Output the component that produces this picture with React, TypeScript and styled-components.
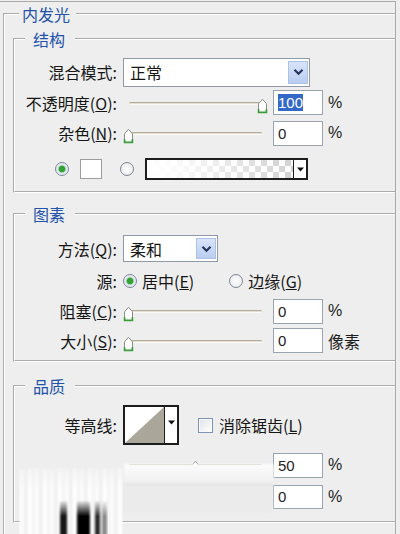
import React from "react";
import styled, { createGlobalStyle } from "styled-components";

const GlobalStyle = createGlobalStyle`
  html, body {
    margin: 0;
    padding: 0;
    background: #eeeeee;
  }
  body {
    width: 400px;
    height: 534px;
    overflow: hidden;
    font-family: "Noto Sans CJK SC", "Noto Sans", sans-serif;
    color: #161616;
  }
`;

const Window = styled.div`
  position: relative;
  box-sizing: border-box;
  width: 396px;
  height: 533px;
  margin-top: 1px;
  padding-left: 3px;
  border-top: 1px solid #a9a9a9;
  border-right: 1px solid #a9a9a9;
  overflow: hidden;
`;

const OuterGroup = styled.fieldset`
  margin: 2px 0 0 0;
  padding: 0;
  min-width: 0;
  border: 2px groove #ffffff;
  border-right: none;
  border-bottom: none;
  height: 560px;
`;

const Group = styled.fieldset<{ $mt: number; $pt: number; $pb: number }>`
  margin: ${(p) => p.$mt}px 0 0 8px;
  padding: ${(p) => p.$pt}px 0 ${(p) => p.$pb}px 0;
  min-width: 0;
  border: 2px groove #ffffff;
  border-right: none;
`;

const Legend = styled.legend<{ $ml: number; $pl: number; $pr: number }>`
  margin-left: ${(p) => p.$ml}px;
  padding: 0 ${(p) => p.$pr}px 0 ${(p) => p.$pl}px;
  height: 20px;
  font-size: 16px;
  line-height: 20px;
  color: #2352a9;
`;

const Row = styled.div<{ $h: number }>`
  display: grid;
  grid-template-columns: 102px auto;
  column-gap: 6px;
  align-items: center;
  height: ${(p) => p.$h}px;
`;

const Label = styled.div`
  text-align: right;
  font-size: 16px;
  line-height: 20px;
  white-space: nowrap;
`;

const Mn = styled.span`
  text-decoration: underline;
`;

const Controls = styled.div<{ $gap?: number }>`
  display: flex;
  align-items: center;
  gap: ${(p) => p.$gap ?? 5}px;
`;

const SelectBox = styled.div<{ $w: number; $h: number }>`
  box-sizing: border-box;
  width: ${(p) => p.$w}px;
  height: ${(p) => p.$h}px;
  display: flex;
  align-items: center;
  justify-content: space-between;
  padding: 0 1px 0 6px;
  border: 1px solid #8f99a8;
  background: #ffffff;
  font-size: 16px;
  line-height: 20px;
`;

const DropBtn = styled.div`
  box-sizing: border-box;
  width: 20px;
  height: calc(100% - 4px);
  display: flex;
  align-items: center;
  justify-content: center;
  background: linear-gradient(#d9e4fa, #b9cdf1);
  border: 1px solid #adc1e6;
`;

const SliderWrap = styled.div`
  position: relative;
  width: 145px;
  height: 16px;
  flex: none;
`;

const Track = styled.div`
  position: absolute;
  left: 6px;
  right: 6px;
  top: 7px;
  height: 3px;
  box-sizing: border-box;
  border-radius: 2px;
  border-top: 1px solid #b3ad9c;
  border-bottom: 1px solid #fbfaf6;
  background: #e2ded2;
`;

const ThumbHolder = styled.div`
  position: absolute;
  top: 0;
  width: 11px;
  height: 16px;
`;

const NumBox = styled.div<{ $h?: number }>`
  box-sizing: border-box;
  width: 50px;
  height: ${(p) => p.$h ?? 25}px;
  display: flex;
  align-items: center;
  padding-left: 4px;
  border: 1px solid #9aa3b0;
  background: #ffffff;
  font: 15px "Liberation Sans", Arial, sans-serif;
  color: #1e1e1e;
  flex: none;
`;

const Selected = styled.span`
  background: #3468c8;
  color: #ffffff;
  line-height: 17px;
`;

const Unit = styled.span<{ $cjk?: boolean }>`
  font-family: ${(p) => (p.$cjk ? '"Noto Sans CJK SC", sans-serif' : '"Liberation Sans", Arial, sans-serif')};
  font-size: 16px;
  color: #1e1e1e;
`;

const ColorRow = styled.div`
  display: flex;
  align-items: center;
  gap: 11px;
  height: 42px;
  padding-left: 40px;
`;

const RadioCircle = styled.span<{ $checked?: boolean }>`
  display: inline-block;
  box-sizing: border-box;
  width: 14px;
  height: 14px;
  border-radius: 50%;
  border: 1px solid #7f8897;
  flex: none;
  background: ${(p) =>
    p.$checked
      ? "radial-gradient(circle, #32a232 0 2.8px, #8fcb8f 3.4px, #dde6ee 4.2px, #f6f7f9 100%)"
      : "radial-gradient(circle, #fdfdfd 0, #f1f2f4 55%, #d9dde3 100%)"};
`;

const Swatch = styled.div`
  box-sizing: border-box;
  width: 22px;
  height: 20px;
  margin-right: 7px;
  border: 1px solid #9c9c9c;
  background: #ffffff;
`;

const GradientPicker = styled.div`
  box-sizing: border-box;
  width: 163px;
  height: 22px;
  display: flex;
  border: 2px solid #1d1d1d;
  background: #ffffff;
`;

const GradientPreview = styled.div`
  flex: 1;
  background-color: #ffffff;
  background-image: linear-gradient(90deg, #ffffff 0%, rgba(255, 255, 255, 0.85) 25%, rgba(255, 255, 255, 0) 100%),
    conic-gradient(#d2d2d2 25%, #ffffff 0 50%, #d2d2d2 0 75%, #ffffff 0);
  background-size: 100% 100%, 12px 12px;
`;

const ArrowSeg = styled.div`
  box-sizing: border-box;
  width: 13px;
  display: flex;
  align-items: center;
  justify-content: center;
  border-left: 1px solid #1d1d1d;
  background: #ffffff;
`;

const Option = styled.label`
  display: flex;
  align-items: center;
  gap: 5px;
  font-size: 16px;
  line-height: 20px;
  white-space: nowrap;
`;

const ContourBox = styled.div`
  box-sizing: border-box;
  width: 56px;
  height: 40px;
  display: flex;
  margin-right: 13px;
  border: 2px solid #1d1d1d;
  background: #ffffff;
  flex: none;
`;

const ContourPreview = styled.div`
  flex: 1;
  display: flex;
`;

const ContourArrow = styled.div`
  box-sizing: border-box;
  width: 13px;
  display: flex;
  align-items: flex-start;
  justify-content: center;
  padding-top: 13px;
  border-left: 1px solid #1d1d1d;
  background: #ffffff;
`;

const CheckBox = styled.span`
  display: inline-block;
  box-sizing: border-box;
  width: 15px;
  height: 15px;
  border: 1px solid #7d94b6;
  background: linear-gradient(135deg, #dfe3e8, #ffffff);
  box-shadow: inset 0 0 0 1px #f7f9fb;
  flex: none;
`;

const Glitch = styled.div`
  position: absolute;
  inset: 0;
  pointer-events: none;
`;

const GlitchBar = styled.div`
  position: absolute;
  left: 124px;
  top: 462px;
  width: 150px;
  height: 22px;
  background: linear-gradient(#fcfcfc, #f1f1f1 80%, #e2e2e2);
  filter: blur(0.8px);
`;

const GlitchShade = styled.div`
  position: absolute;
  left: 119px;
  top: 484px;
  width: 154px;
  height: 27px;
  background: #ebebeb;
  filter: blur(0.8px);
`;

const GlitchLeft = styled.div`
  position: absolute;
  left: 19px;
  top: 466px;
  width: 104px;
  height: 72px;
  background: repeating-linear-gradient(
    90deg,
    #fbfbfb 0 6px,
    #e6e6e6 6px 8px,
    #ffffff 8px 13px,
    #efefef 13px 15px
  );
  filter: blur(1.4px);
  -webkit-mask-image: linear-gradient(rgba(0, 0, 0, 0.4), #000 30%);
  mask-image: linear-gradient(rgba(0, 0, 0, 0.4), #000 30%);
`;

const GlitchDark = styled.div`
  position: absolute;
  left: 58px;
  top: 498px;
  width: 50px;
  height: 36px;
  background: linear-gradient(
    90deg,
    transparent 0 2px,
    #151515 2px 9px,
    transparent 9px 19px,
    #000000 19px 32px,
    transparent 32px 37px,
    #2a2a2a 37px 42px,
    transparent 42px 44px,
    #8a8a8a 44px 49px,
    transparent 49px
  );
  filter: blur(1.2px);
  -webkit-mask-image: linear-gradient(transparent, #000 45%);
  mask-image: linear-gradient(transparent, #000 45%);
`;

function Chevron() {
  return (
    <svg width="11" height="8" viewBox="0 0 11 8">
      <path d="M1.5 1.8L5.5 5.8L9.5 1.8" fill="none" stroke="#25355d" strokeWidth="2.2" />
    </svg>
  );
}

function SmallArrow() {
  return (
    <svg width="7" height="5" viewBox="0 0 7 5">
      <path d="M0 0.5H7L3.5 4.5Z" fill="#111111" />
    </svg>
  );
}

function ThumbIcon() {
  return (
    <svg width="11" height="16" viewBox="0 0 11 16">
      <path d="M1.5 14.5V5.8L5.5 1.3L9.5 5.8V14.5Z" fill="#ffffff" stroke="#8b8b8b" />
      <path d="M1.6 11.2V14.4H9.4V11.2" fill="none" stroke="#3a9d3a" strokeWidth="1.7" />
    </svg>
  );
}

function Slider({ value }: { value: number }) {
  return (
    <SliderWrap>
      <Track />
      <ThumbHolder style={{ left: `${(value / 100) * 134}px` }}>
        <ThumbIcon />
      </ThumbHolder>
    </SliderWrap>
  );
}

function Radio({ checked }: { checked?: boolean }) {
  return <RadioCircle $checked={checked} />;
}

export default function App() {
  return (
    <>
      <GlobalStyle />
      <Window>
        <OuterGroup>
          <Legend $ml={14} $pl={3} $pr={6}>
            内发光
          </Legend>

          <Group $mt={5} $pt={8} $pb={1}>
            <Legend $ml={10} $pl={8} $pr={10}>
              结构
            </Legend>
            <Row $h={30}>
              <Label>混合模式:</Label>
              <Controls>
                <SelectBox $w={187} $h={29}>
                  <span>正常</span>
                  <DropBtn>
                    <Chevron />
                  </DropBtn>
                </SelectBox>
              </Controls>
            </Row>
            <Row $h={31}>
              <Label>
                不透明度(<Mn>O</Mn>):
              </Label>
              <Controls>
                <Slider value={100} />
                <NumBox>
                  <Selected>100</Selected>
                </NumBox>
                <Unit>%</Unit>
              </Controls>
            </Row>
            <Row $h={30}>
              <Label>
                杂色(<Mn>N</Mn>):
              </Label>
              <Controls>
                <Slider value={0} />
                <NumBox>0</NumBox>
                <Unit>%</Unit>
              </Controls>
            </Row>
            <ColorRow>
              <Radio checked />
              <Swatch />
              <Radio />
              <GradientPicker>
                <GradientPreview />
                <ArrowSeg>
                  <SmallArrow />
                </ArrowSeg>
              </GradientPicker>
            </ColorRow>
          </Group>

          <Group $mt={11} $pt={9} $pb={4}>
            <Legend $ml={10} $pl={8} $pr={10}>
              图素
            </Legend>
            <Row $h={31}>
              <Label>
                方法(<Mn>Q</Mn>):
              </Label>
              <Controls>
                <SelectBox $w={95} $h={27}>
                  <span>柔和</span>
                  <DropBtn>
                    <Chevron />
                  </DropBtn>
                </SelectBox>
              </Controls>
            </Row>
            <Row $h={33}>
              <Label>源:</Label>
              <Controls $gap={35}>
                <Option>
                  <Radio checked />
                  <span>
                    居中(<Mn>E</Mn>)
                  </span>
                </Option>
                <Option>
                  <Radio />
                  <span>
                    边缘(<Mn>G</Mn>)
                  </span>
                </Option>
              </Controls>
            </Row>
            <Row $h={28}>
              <Label>
                阻塞(<Mn>C</Mn>):
              </Label>
              <Controls>
                <Slider value={0} />
                <NumBox>0</NumBox>
                <Unit>%</Unit>
              </Controls>
            </Row>
            <Row $h={31}>
              <Label>
                大小(<Mn>S</Mn>):
              </Label>
              <Controls>
                <Slider value={0} />
                <NumBox>0</NumBox>
                <Unit $cjk>像素</Unit>
              </Controls>
            </Row>
          </Group>

          <Group $mt={14} $pt={6} $pb={10}>
            <Legend $ml={10} $pl={8} $pr={10}>
              品质
            </Legend>
            <Row $h={46}>
              <Label>等高线:</Label>
              <Controls $gap={6}>
                <ContourBox>
                  <ContourPreview>
                    <svg width="100%" height="100%" viewBox="0 0 38 36" preserveAspectRatio="none">
                      <path d="M0 36L38 0V36Z" fill="#aaa699" />
                    </svg>
                  </ContourPreview>
                  <ContourArrow>
                    <SmallArrow />
                  </ContourArrow>
                </ContourBox>
                <CheckBox />
                <Option>
                  <span>
                    消除锯齿(<Mn>L</Mn>)
                  </span>
                </Option>
              </Controls>
            </Row>
            <Row $h={34}>
              <Label />
              <Controls>
                <Slider value={50} />
                <NumBox>50</NumBox>
                <Unit>%</Unit>
              </Controls>
            </Row>
            <Row $h={29}>
              <Label />
              <Controls>
                <Slider value={0} />
                <NumBox $h={24}>0</NumBox>
                <Unit>%</Unit>
              </Controls>
            </Row>
          </Group>
        </OuterGroup>

        <Glitch>
          <GlitchBar />
          <GlitchShade />
          <GlitchLeft />
          <GlitchDark />
        </Glitch>
      </Window>
    </>
  );
}
